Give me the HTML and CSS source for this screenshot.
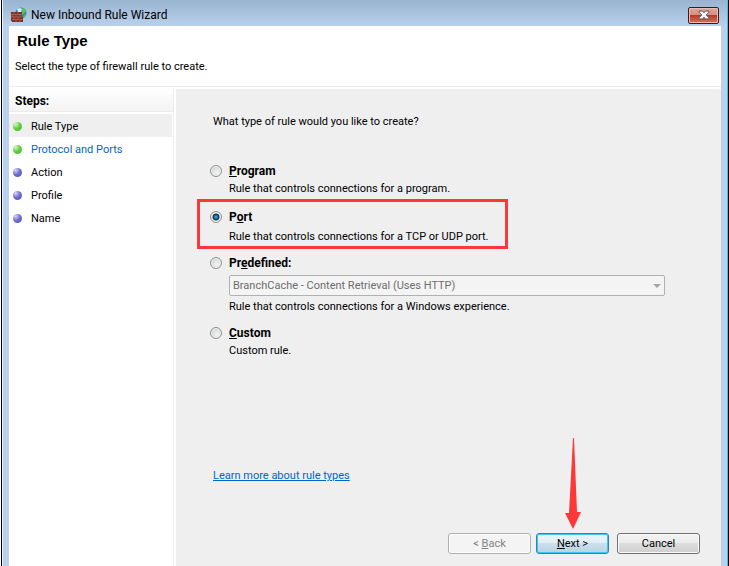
FILE: index.html
```html
<!DOCTYPE html>
<html lang="en">
<head>
    <meta charset="UTF-8">
    <meta name="viewport" content="width=device-width, initial-scale=1.0">
    <title>New Inbound Rule Wizard</title>
    <link rel="stylesheet" href="styles.css">
</head>
<body>
    <div class="window">
        <div class="titlebar">
            <svg class="app-icon" width="16" height="16" viewBox="0 0 16 16">
                <circle cx="10" cy="6" r="5.500" fill="#2f7fd0"/>
                <path d="M11 1c2 0 4 2 4 4l-2 1-1 2-2-2 1-2zM13 8l2-1-1 3-2 1z" fill="#5fc04a"/>
                <path d="M6 2l3-1 2 1-1 3-3 0z" fill="#d6f1fb"/>
                <path d="M0 5h11v5h1v5H1v-1H0z" fill="#7c2f24"/>
                <path d="M0 7.500h11M0 10h11M1 12.500h11M3 5v2.500M7 5v2.500M1.500 7.500V10M5 7.500V10M9 7.500V10M3 10v2.500M7 10v2.500M5 12.500V15M9 12.500V15" stroke="#c07862" stroke-width=".6" fill="none"/>
            </svg>
            <span class="title">New Inbound Rule Wizard</span>
            <button class="close" type="button" aria-label="Close">
                <svg width="12" height="10" viewBox="0 0 12 10">
                    <path d="M1 1h3.500L6 2.700 7.500 1H11v1.200L8.300 5 11 7.800V9H7.500L6 7.300 4.500 9H1V7.800L3.700 5 1 2.200z" fill="#f4f4f4" stroke="#535666" stroke-width="1"/>
                </svg>
            </button>
        </div>
        <div class="client">
            <header class="header">
                <h1>Rule Type</h1>
                <p>Select the type of firewall rule to create.</p>
            </header>
            <div class="content">
                <nav class="steps">
                    <h2>Steps:</h2>
                    <ul>
                        <li class="done current">Rule Type</li>
                        <li class="done"><a href="#">Protocol and Ports</a></li>
                        <li>Action</li>
                        <li>Profile</li>
                        <li>Name</li>
                    </ul>
                </nav>
                <form class="page">
                    <p class="question">What type of rule would you like to create?</p>
                    <div class="option">
                        <input type="radio" name="rule" id="program">
                        <label for="program"><u>P</u>rogram</label>
                        <p>Rule that controls connections for a program.</p>
                    </div>
                    <div class="option port">
                        <input type="radio" name="rule" id="port" checked>
                        <label for="port">P<u>o</u>rt</label>
                        <p>Rule that controls connections for a TCP or UDP port.</p>
                    </div>
                    <div class="option predefined">
                        <input type="radio" name="rule" id="predefined">
                        <label for="predefined">Pr<u>e</u>defined:</label>
                        <div class="select">
                            <select aria-label="Predefined rule" disabled>
                                <option>BranchCache - Content Retrieval (Uses HTTP)</option>
                            </select>
                        </div>
                        <p>Rule that controls connections for a Windows experience.</p>
                    </div>
                    <div class="option">
                        <input type="radio" name="rule" id="custom">
                        <label for="custom"><u>C</u>ustom</label>
                        <p>Custom rule.</p>
                    </div>
                    <div class="footer">
                        <a class="learn" href="#">Learn more about rule types</a>
                        <div class="buttons">
                            <button type="button" disabled>&lt; <u>B</u>ack</button>
                            <div class="next-wrap">
                                <svg class="arrow" width="16" height="92" viewBox="0 0 16 92">
                                    <path d="M8 0h1l3 74h4L8 91 0 75h4z" fill="#fd3838"/>
                                </svg>
                                <button class="next" type="button"><u>N</u>ext &gt;</button>
                            </div>
                            <button type="button">Cancel</button>
                        </div>
                    </div>
                </form>
            </div>
        </div>
    </div>
</body>
</html>
```
FILE: styles.css
```css
*, *::before, *::after {
    box-sizing: border-box;
}
body {
    margin: 0;
    background: white;
    color: #000;
    font-family: Roboto, Arial, sans-serif;
    font-size: 11px;
    line-height: 16px;
}
h1, h2, p, ul {
    margin: 0;
    padding: 0;
}
.window {
    display: flex;
    flex-direction: column;
    min-height: 100vh;
    margin-left: 1px;
    padding: 0 7px;
    border-left: 1px solid #000;
    border-right: 1px solid #000;
    background: linear-gradient(#99b4d1, #b9d1ea 26px);
    box-shadow: inset 1px 0 #e8f2fb, inset -1px 0 #35c4e8;
}
.titlebar {
    display: flex;
    align-items: center;
    height: 26px;
    padding: 4px 2px 0;
}
.title {
    flex: 1;
    margin-left: 4px;
    font-size: 12px;
}
.close {
    display: flex;
    align-items: center;
    justify-content: center;
    width: 31px;
    height: 17px;
    padding: 0;
    border: 1px solid #4a1320;
    border-radius: 2px;
    background: linear-gradient(#e5a599, #d98c7e 50%, #bb3a22 50%, #d2745c);
    box-shadow: inset 0 0 0 1px #efbcb2;
}
.client {
    display: flex;
    flex-direction: column;
    flex: 1;
    background: white;
}
.header {
    height: 61px;
    padding: 7px 6px;
    border-bottom: 1px solid #ececec;
}
h1 {
    padding-left: 2px;
    font-family: "Liberation Sans", Arial, sans-serif;
    font-size: 15px;
}
.header p {
    margin-top: 10px;
}
.content {
    display: flex;
    flex: 1;
    padding-top: 2px;
}
.steps {
    width: 165px;
    border-right: 1px solid #ececec;
}
.steps h2 {
    height: 23px;
    padding: 1px 0 0 6px;
    border-bottom: 1px solid #ececec;
    background: linear-gradient(#fff, #f3f3f3);
    font-size: 12px;
    line-height: 23px;
}
.steps ul {
    list-style: none;
    margin: 2px 1px 0 0;
}
.steps li {
    display: flex;
    align-items: center;
    height: 23px;
    padding: 2px 0 0 4px;
}
.steps li::before {
    content: "";
    width: 9px;
    height: 9px;
    margin-right: 9px;
    border-radius: 50%;
    background: radial-gradient(circle at 30% 25%, #d5d5f5, #6a68cf 50%, #5c5ac0);
}
.steps li.done::before {
    background: radial-gradient(circle at 30% 25%, #d6f7c8, #5ccb38 50%, #4dbb2c);
}
.steps .current {
    background: #efefef;
}
a {
    color: #0066cc;
}
.steps a {
    text-decoration: none;
}
.page {
    display: flex;
    flex: 1;
    flex-direction: column;
    margin-left: 2px;
    padding: 25px 21px 12px 34px;
    background: #efefef;
}
.question {
    margin: 0 0 32px 3px;
}
.option {
    display: grid;
    grid-template-columns: 19px 1fr;
    row-gap: 1px;
    align-items: center;
    margin-bottom: 11px;
    padding-right: 35px;
}
.option p, .select {
    grid-column: 2;
}
.option label {
    font-size: 12px;
    font-weight: bold;
    line-height: 18px;
}
.option input {
    appearance: none;
    width: 12px;
    height: 12px;
    margin: 0;
    border: 1px solid #8e8f8f;
    border-radius: 50%;
    background: radial-gradient(circle at 60% 65%, #f4f4f4, #c5c8cb);
    box-shadow: inset 0 0 0 1px #f4f4f4;
}
.option input:checked {
    background: radial-gradient(circle, #4fb8e4, #16608f 2px, #0b2f4c 3px, #e4e8ea 4px);
}
.port {
    position: relative;
    row-gap: 3px;
    margin-bottom: 9px;
}
/* red highlight frame */
.port::after {
    content: "";
    position: absolute;
    top: -9px;
    left: -13px;
    width: 311px;
    height: 50px;
    border: 3px solid #fd3838;
    pointer-events: none;
}
.predefined {
    row-gap: 3px;
    margin-bottom: 9px;
}
.select {
    position: relative;
}
.select::after {
    content: "";
    position: absolute;
    top: 9px;
    right: 4px;
    border: 4px solid transparent;
    border-top-color: #a5a5a5;
    border-bottom: 0;
}
.select select {
    display: block;
    appearance: none;
    width: 100%;
    height: 21px;
    padding: 0 3px;
    border: 1px solid #adb2b5;
    border-radius: 2px;
    background: #f4f4f4;
    color: #6d6d6d;
    font: inherit;
    opacity: 1;
}
.footer {
    display: flex;
    flex-direction: column;
    margin-top: auto;
}
.learn {
    align-self: flex-start;
    margin: 0 0 49px 3px;
}
.buttons {
    display: flex;
    justify-content: flex-end;
}
.buttons button {
    width: 83px;
    height: 21px;
    padding: 1px 0 0;
    border: 1px solid #707070;
    border-radius: 3px;
    background: linear-gradient(#f2f2f2, #ebebeb 50%, #dddddd 50%, #cfcfcf);
    box-shadow: inset 0 0 0 1px #fbfbfb;
    color: #000;
    font: inherit;
}
.buttons button:disabled {
    border-color: #adb2b5;
    background: #f4f4f4;
    color: #838383;
}
.next-wrap {
    position: relative;
    margin: 0 8px 0 5px;
}
.buttons .next {
    width: 73px;
    border-color: #3c7fb1;
    background: linear-gradient(#eef5f9, #deedf5 50%, #cbe0ec 50%, #b8d3e2);
    box-shadow: inset 0 0 0 1px #35c8f5;
}
.arrow {
    position: absolute;
    left: 29px;
    bottom: 24px;
}
```
